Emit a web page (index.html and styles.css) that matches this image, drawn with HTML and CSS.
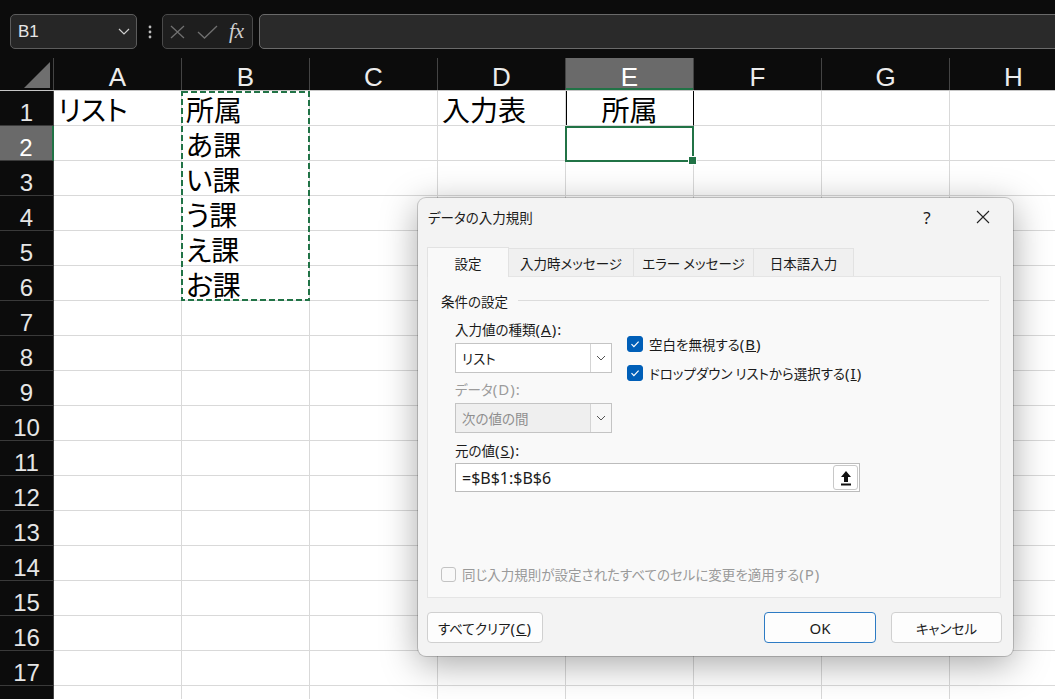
FILE: index.html
```html
<!DOCTYPE html>
<html lang="ja">
<head>
	<meta charset="UTF-8" />
	<title>データの入力規則</title>
	<link rel="stylesheet" href="styles.css">
</head>
<body>
	<!-- formula bar -->
	<div class="topbar">
		<div class="namebox">
			<span>B1</span>
			<svg width="12" height="7" viewBox="0 0 12 7"><path d="M1 1L6 6L11 1" fill="none" stroke="#cfcfcf" stroke-width="1.2"/></svg>
		</div>
		<div class="dots">
			<svg width="4" height="14" viewBox="0 0 4 14"><circle cx="2" cy="2" r="1.4" fill="#bdbdbd"/><circle cx="2" cy="7" r="1.4" fill="#bdbdbd"/><circle cx="2" cy="12" r="1.4" fill="#bdbdbd"/></svg>
		</div>
		<div class="fxbox">
			<svg width="15" height="14" viewBox="0 0 15 14"><path d="M1 1L14 13M14 1L1 13" stroke="#707070" stroke-width="1.3"/></svg>
			<svg width="21" height="14" viewBox="0 0 21 14"><path d="M1 7L7.5 13L20 1" fill="none" stroke="#707070" stroke-width="1.3"/></svg>
			<span class="fx">fx</span>
		</div>
		<div class="formula"></div>
	</div>

	<!-- sheet -->
	<div class="sheet">
		<div class="hdr">
			<div class="corner"><svg width="54" height="32" viewBox="0 0 54 32"><polygon points="24,30 50,4 50,30" fill="#6f6f6f"/></svg></div>
			<div class="ch">A</div>
			<div class="ch">B</div>
			<div class="ch">C</div>
			<div class="ch">D</div>
			<div class="ch on">E</div>
			<div class="ch">F</div>
			<div class="ch">G</div>
			<div class="ch">H</div>
		</div>
		<div class="row"><div class="rh">1</div><div class="c">リスト</div><div class="c">所属</div><div class="c"></div><div class="c">入力表</div><div class="c mid e1">所属</div><div class="c"></div><div class="c"></div><div class="c"></div></div>
		<div class="row"><div class="rh on">2</div><div class="c"></div><div class="c">あ課</div><div class="c"></div><div class="c"></div><div class="c"></div><div class="c"></div><div class="c"></div><div class="c"></div></div>
		<div class="row"><div class="rh">3</div><div class="c"></div><div class="c">い課</div><div class="c"></div><div class="c"></div><div class="c"></div><div class="c"></div><div class="c"></div><div class="c"></div></div>
		<div class="row"><div class="rh">4</div><div class="c"></div><div class="c">う課</div><div class="c"></div><div class="c"></div><div class="c"></div><div class="c"></div><div class="c"></div><div class="c"></div></div>
		<div class="row"><div class="rh">5</div><div class="c"></div><div class="c">え課</div><div class="c"></div><div class="c"></div><div class="c"></div><div class="c"></div><div class="c"></div><div class="c"></div></div>
		<div class="row"><div class="rh">6</div><div class="c"></div><div class="c">お課</div><div class="c"></div><div class="c"></div><div class="c"></div><div class="c"></div><div class="c"></div><div class="c"></div></div>
		<div class="row"><div class="rh">7</div><div class="c"></div><div class="c"></div><div class="c"></div><div class="c"></div><div class="c"></div><div class="c"></div><div class="c"></div><div class="c"></div></div>
		<div class="row"><div class="rh">8</div><div class="c"></div><div class="c"></div><div class="c"></div><div class="c"></div><div class="c"></div><div class="c"></div><div class="c"></div><div class="c"></div></div>
		<div class="row"><div class="rh">9</div><div class="c"></div><div class="c"></div><div class="c"></div><div class="c"></div><div class="c"></div><div class="c"></div><div class="c"></div><div class="c"></div></div>
		<div class="row"><div class="rh">10</div><div class="c"></div><div class="c"></div><div class="c"></div><div class="c"></div><div class="c"></div><div class="c"></div><div class="c"></div><div class="c"></div></div>
		<div class="row"><div class="rh">11</div><div class="c"></div><div class="c"></div><div class="c"></div><div class="c"></div><div class="c"></div><div class="c"></div><div class="c"></div><div class="c"></div></div>
		<div class="row"><div class="rh">12</div><div class="c"></div><div class="c"></div><div class="c"></div><div class="c"></div><div class="c"></div><div class="c"></div><div class="c"></div><div class="c"></div></div>
		<div class="row"><div class="rh">13</div><div class="c"></div><div class="c"></div><div class="c"></div><div class="c"></div><div class="c"></div><div class="c"></div><div class="c"></div><div class="c"></div></div>
		<div class="row"><div class="rh">14</div><div class="c"></div><div class="c"></div><div class="c"></div><div class="c"></div><div class="c"></div><div class="c"></div><div class="c"></div><div class="c"></div></div>
		<div class="row"><div class="rh">15</div><div class="c"></div><div class="c"></div><div class="c"></div><div class="c"></div><div class="c"></div><div class="c"></div><div class="c"></div><div class="c"></div></div>
		<div class="row"><div class="rh">16</div><div class="c"></div><div class="c"></div><div class="c"></div><div class="c"></div><div class="c"></div><div class="c"></div><div class="c"></div><div class="c"></div></div>
		<div class="row"><div class="rh">17</div><div class="c"></div><div class="c"></div><div class="c"></div><div class="c"></div><div class="c"></div><div class="c"></div><div class="c"></div><div class="c"></div></div>
		<div class="row"><div class="rh">18</div><div class="c"></div><div class="c"></div><div class="c"></div><div class="c"></div><div class="c"></div><div class="c"></div><div class="c"></div><div class="c"></div></div>

		<!-- copy range + active cell -->
		<svg class="ants" width="129" height="210" viewBox="0 0 129 210"><rect x="1" y="1" width="127" height="208" fill="none" stroke="#217346" stroke-width="2" stroke-dasharray="6 3"/></svg>
		<div class="sel"><span class="handle"></span></div>
	</div>

	<!-- data validation dialog -->
	<div class="dialog">
		<div class="dlg-title">
			<span>データの入力規則</span>
			<span class="qm">?</span>
			<span class="close"><svg width="14" height="14" viewBox="0 0 14 14"><path d="M1 1L13 13M13 1L1 13" stroke="#222" stroke-width="1.1"/></svg></span>
		</div>
		<div class="tabs">
			<div class="tab active">設定</div>
			<div class="tab">入力時メッセージ</div>
			<div class="tab">エラー メッセージ</div>
			<div class="tab">日本語入力</div>
		</div>
		<div class="panel">
			<div class="legend"><span>条件の設定</span><i></i></div>
			<div class="fields">
				<div class="top">
					<div class="left">
						<div class="lbl first">入力値の種類<span class="en">(<u>A</u>):</span></div>
						<div class="combo"><span>リスト</span><b><svg width="10" height="6" viewBox="0 0 10 6"><path d="M1 1L5 5L9 1" fill="none" stroke="#555" stroke-width="1"/></svg></b></div>
						<div class="lbl dis">データ<span class="en">(D):</span></div>
						<div class="combo dis"><span>次の値の間</span><b><svg width="10" height="6" viewBox="0 0 10 6"><path d="M1 1L5 5L9 1" fill="none" stroke="#555" stroke-width="1"/></svg></b></div>
					</div>
					<div class="checks">
						<div class="chk"><span class="box on"><svg width="14" height="14" viewBox="0 0 14 14"><path d="M3.5 7.2L5.9 9.6L10.6 4.6" fill="none" stroke="#fff" stroke-width="1.2"/></svg></span><span>空白を無視する<span class="en">(<u>B</u>)</span></span></div>
						<div class="chk"><span class="box on"><svg width="14" height="14" viewBox="0 0 14 14"><path d="M3.5 7.2L5.9 9.6L10.6 4.6" fill="none" stroke="#fff" stroke-width="1.2"/></svg></span><span>ドロップダウン リストから選択する<span class="en">(<u>I</u>)</span></span></div>
					</div>
				</div>
				<div class="lbl src">元の値<span class="en">(<u>S</u>):</span></div>
				<div class="source">
					<span>=$B$1:$B$6</span>
					<b class="pick"><svg width="12" height="16" viewBox="0 0 12 16"><path d="M6 1L11 7H8V12H4V7H1Z" fill="#111"/><rect x="1" y="13.5" width="10" height="2" fill="#111"/></svg></b>
				</div>
			</div>
			<div class="apply"><span class="box"></span><span>同じ入力規則が設定されたすべてのセルに変更を適用する<span class="en">(P)</span></span></div>
		</div>
		<div class="footer">
			<button class="btn clear">すべてクリア<span class="en">(<u>C</u>)</span></button>
			<button class="btn ok">OK</button>
			<button class="btn cancel">キャンセル</button>
		</div>
	</div>
</body>
</html>
```

FILE: styles.css
```css
body {
	margin: 0;
	width: 1055px;
	height: 699px;
	overflow: hidden;
	position: relative;
	background: #0c0c0c;
	font-family: "Noto Sans CJK JP", sans-serif;
}

/* formula bar */
.topbar {
	display: flex;
	height: 58px;
	box-sizing: border-box;
	padding: 14px 0 0 10px;
}

.namebox {
	width: 127px;
	height: 35px;
	box-sizing: border-box;
	border: 1px solid #5c5c5c;
	border-radius: 5px;
	background: #262626;
	display: flex;
	align-items: center;
	justify-content: space-between;
	padding: 0 6px 0 7px;
	color: #e6e6e6;
	font: 17px "Liberation Sans", sans-serif;
}

.dots {
	width: 25px;
	height: 35px;
	display: flex;
	align-items: center;
	justify-content: center;
}

.fxbox {
	width: 91px;
	height: 35px;
	box-sizing: border-box;
	border: 1px solid #4a4a4a;
	border-radius: 5px;
	background: #1e1e1e;
	display: flex;
	align-items: center;
	padding-left: 7px;
	gap: 12px;
}

.fx {
	font: italic 21px "Liberation Serif", serif;
	color: #cfcfcf;
	margin-left: -1px;
}

.formula {
	flex: 1;
	height: 35px;
	margin: 0 -20px 0 6px;
	box-sizing: border-box;
	border: 1px solid #6a6a6a;
	border-radius: 5px;
	background: #2a2a2a;
}

/* sheet */
.sheet {
	position: relative;
}

.hdr {
	display: flex;
	height: 33px;
	box-sizing: border-box;
	border-bottom: 1px solid #c6c6c6;
}

.corner {
	width: 54px;
	flex: none;
	box-sizing: border-box;
	border-right: 1px solid #444;
}

.ch {
	width: 128px;
	flex: none;
	height: 32px;
	box-sizing: border-box;
	border-right: 1px solid #444;
	padding-top: 3px;
	color: #ececec;
	font: 26px/32px "Liberation Sans", sans-serif;
	text-align: center;
}

.ch.on {
	background: #6a6a6a;
	color: #fff;
	box-shadow: inset 0 -2px 0 #217346;
}

.row {
	display: flex;
	height: 35px;
}

.rh {
	width: 54px;
	flex: none;
	height: 35px;
	box-sizing: border-box;
	border-bottom: 1px solid #3a3a3a;
	border-right: 1px solid #444;
	padding-top: 4px;
	color: #e6e6e6;
	font: 24px/35px "Liberation Sans", sans-serif;
	text-align: center;
}

.rh.on {
	background: #6a6a6a;
	color: #fff;
	border-right: 2px solid #217346;
}

.c {
	width: 128px;
	flex: none;
	height: 35px;
	box-sizing: border-box;
	border-right: 1px solid #d9d9d9;
	border-bottom: 1px solid #d9d9d9;
	background: #fff;
	padding: 2px 0 0 4px;
	font-size: 28px;
	line-height: 32px;
	white-space: nowrap;
	color: #000;
	font-feature-settings: "palt";
}

.c.mid {
	text-align: center;
	padding-left: 0;
}

.c.e1 {
	border-right-color: #000;
	box-shadow: inset 1px 0 0 #000;
}

.ants {
	position: absolute;
	left: 181px;
	top: 33px;
}

.sel {
	position: absolute;
	left: 565px;
	top: 68px;
	width: 129px;
	height: 36px;
	box-sizing: border-box;
	border: 2px solid #217346;
}

.handle {
	position: absolute;
	right: -5px;
	bottom: -5px;
	width: 7px;
	height: 7px;
	background: #217346;
	border: 1px solid #fff;
}

/* dialog */
.dialog {
	position: absolute;
	left: 418px;
	top: 198px;
	width: 595px;
	height: 458px;
	display: flex;
	flex-direction: column;
	background: #f3f3f3;
	border-radius: 8px;
	box-shadow: 0 0 0 1px rgba(0, 0, 0, 0.18), 0 8px 36px rgba(0, 0, 0, 0.35);
	font-size: 13.5px;
	color: #1b1b1b;
	font-feature-settings: "palt";
	z-index: 2;
}

.en {
	font-family: "Noto Sans", sans-serif;
	font-size: 15px;
	letter-spacing: 1px;
	font-feature-settings: normal;
}

.dlg-title {
	height: 38px;
	display: flex;
	align-items: center;
	padding-left: 10px;
}

.qm {
	margin-left: auto;
	width: 46px;
	text-align: center;
	font: 17px "Noto Sans", sans-serif;
}

.close {
	width: 46px;
	margin: 0 7px 0 10px;
	display: flex;
	justify-content: center;
}

.tabs {
	display: flex;
	height: 29px;
	margin: 11px 0 0 9px;
	position: relative;
	z-index: 1;
}

.tab {
	height: 28px;
	margin-top: 1px;
	box-sizing: border-box;
	border: 1px solid #e2e2e2;
	border-left: none;
	border-bottom: none;
	background: #f0f0f0;
	display: flex;
	align-items: center;
	justify-content: center;
}

.tab:nth-child(1) { width: 82px; }
.tab:nth-child(2) { width: 125px; }
.tab:nth-child(3) { width: 120px; }
.tab:nth-child(4) { width: 100px; }

.tab.active {
	height: 30px;
	margin-top: 0;
	border-left: 1px solid #e2e2e2;
	background: #f9f9f9;
}

.panel {
	height: 322px;
	margin: 0 12px 0 9px;
	box-sizing: border-box;
	border: 1px solid #e5e5e5;
	background: #f9f9f9;
	padding: 15px 11px 15px 13px;
	display: flex;
	flex-direction: column;
}

.legend {
	display: flex;
	align-items: center;
	height: 17px;
	gap: 10px;
}

.legend i {
	flex: 1;
	border-top: 1px solid #dcdcdc;
}

.fields {
	margin-left: 14px;
}

.top {
	display: flex;
}

.lbl {
	height: 20px;
	line-height: 20px;
	white-space: nowrap;
}

.lbl.first { margin-top: 10px; }
.lbl.dis { margin-top: 6px; color: #9c9c9c; }
.lbl.src { margin-top: 7px; }

.combo {
	width: 157px;
	height: 30px;
	margin-top: 4px;
	box-sizing: border-box;
	border: 1px solid #c4c4c4;
	background: #fff;
	display: flex;
	align-items: center;
}

.combo span {
	flex: 1;
	padding-left: 6px;
}

.combo b {
	width: 20px;
	height: 100%;
	border-left: 1px solid #d4d4d4;
	display: flex;
	align-items: center;
	justify-content: center;
}

.combo.dis {
	background: #efefef;
	color: #8e8e8e;
}

.combo.dis b {
	background: #f7f7f7;
}

.checks {
	margin: 27px 0 0 15px;
	display: flex;
	flex-direction: column;
	gap: 13px;
}

.chk {
	display: flex;
	align-items: center;
	gap: 6px;
	height: 16px;
	white-space: nowrap;
}

.box {
	width: 16px;
	height: 16px;
	flex: none;
	box-sizing: border-box;
	border: 1px solid #8a8a8a;
	border-radius: 3px;
	background: #fff;
	display: flex;
	align-items: center;
	justify-content: center;
}

.box.on {
	background: #005fb8;
	border-color: #005fb8;
}

.source {
	width: 405px;
	height: 29px;
	margin-top: 3px;
	box-sizing: border-box;
	border: 1px solid #bcbcbc;
	background: #fff;
	display: flex;
	align-items: center;
	justify-content: space-between;
	padding: 0 1px 0 6px;
	font: 16px "Noto Sans", sans-serif;
}

.pick {
	width: 25px;
	height: 25px;
	box-sizing: border-box;
	border: 1px solid #c8c8c8;
	border-radius: 3px;
	background: #fff;
	display: flex;
	align-items: center;
	justify-content: center;
}

.apply {
	margin-top: auto;
	display: flex;
	align-items: center;
	gap: 6px;
	height: 16px;
	color: #9a9a9a;
	white-space: nowrap;
}

.apply .box {
	width: 15px;
	height: 15px;
	border-color: #c3c3c3;
	background: transparent;
}

.footer {
	display: flex;
	gap: 15px;
	margin: 14px 11px 0 9px;
}

.btn {
	height: 31px;
	padding: 0;
	box-sizing: border-box;
	border: 1px solid #d0d0d0;
	border-radius: 4px;
	background: #fdfdfd;
	color: #1b1b1b;
	font: inherit;
	font-feature-settings: "palt";
}

.btn.clear { width: 116px; }

.btn.ok {
	width: 112px;
	margin-left: auto;
	border-color: #2d7bc4;
	font: 15px "Noto Sans", sans-serif;
}

.btn.cancel { width: 111px; }
```
